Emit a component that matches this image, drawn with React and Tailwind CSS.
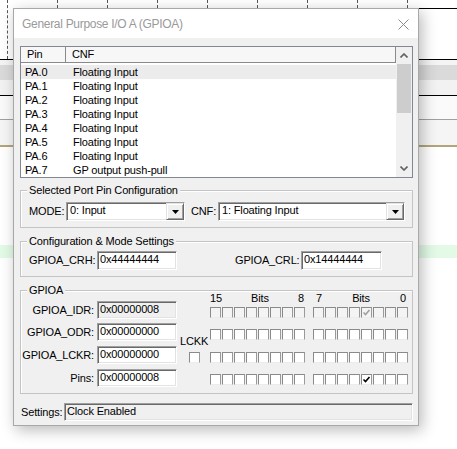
import React from "react";

const sunken =
  "border border-t-[#a0a0a0] border-l-[#a0a0a0] border-b-white border-r-white shadow-[inset_1px_1px_0_#696969,inset_-1px_-1px_0_#e3e3e3]";
const raised =
  "border border-t-[#e3e3e3] border-l-[#e3e3e3] border-b-[#696969] border-r-[#696969] shadow-[inset_1px_1px_0_#ffffff,inset_-1px_-1px_0_#a0a0a0]";

const rows = [
  ["PA.0", "Floating Input"],
  ["PA.1", "Floating Input"],
  ["PA.2", "Floating Input"],
  ["PA.3", "Floating Input"],
  ["PA.4", "Floating Input"],
  ["PA.5", "Floating Input"],
  ["PA.6", "Floating Input"],
  ["PA.7", "GP output push-pull"],
];

function Check({ color = "#000" }) {
  return (
    <svg width="9" height="9" viewBox="0 0 9 9">
      <path d="M1.5 4.5 L3.5 6.5 L7.5 2" fill="none" stroke={color} strokeWidth="1.6" />
    </svg>
  );
}

function Box({ checked, disabled }) {
  return (
    <div
      className={`w-[11px] h-[11px] flex items-center justify-center border border-t-[#8a8a8a] border-l-[#8a8a8a] border-r-[#9a9a9a] border-b-[#ececec] ${
        disabled ? "bg-[#f4f4f4]" : "bg-white"
      }`}
    >
      {checked ? <Check color={disabled ? "#a0a0a0" : "#000"} /> : null}
    </div>
  );
}

function BitRow({ checkedBit, disabled, className = "" }) {
  const high = Array.from({ length: 8 }, (_, i) => 15 - i);
  const low = Array.from({ length: 8 }, (_, i) => 7 - i);
  return (
    <div className={`flex ${className}`}>
      <div className="flex gap-[1px] w-[96px]">
        {high.map((b) => (
          <Box key={b} checked={b === checkedBit} disabled={disabled} />
        ))}
      </div>
      <div className="flex gap-[1px] ml-[7px]">
        {low.map((b) => (
          <Box key={b} checked={b === checkedBit} disabled={disabled} />
        ))}
      </div>
    </div>
  );
}

function Arrow() {
  return (
    <svg width="7" height="4" viewBox="0 0 7 4">
      <polygon points="0,0 7,0 3.5,4" fill="#000" />
    </svg>
  );
}

function Select({ value, className = "" }) {
  return (
    <div className={`${sunken} bg-white h-[19px] flex items-stretch ${className}`}>
      <div className="flex-1 pl-[3px] leading-[15px]">{value}</div>
      <div className={`${raised} bg-[#f0f0f0] w-[18px] flex items-center justify-center`}>
        <Arrow />
      </div>
    </div>
  );
}

function Edit({ value, gray, className = "" }) {
  return (
    <div className={`${sunken} ${gray ? "bg-[#f0f0f0]" : "bg-white"} pl-[2px] leading-[14px] ${className}`}>
      {value}
    </div>
  );
}

function Group({ label, className = "", children }) {
  return (
    <div className={`relative border border-[#c4c4c4] shadow-[inset_1px_1px_0_#ffffff] ${className}`}>
      <span className="absolute -top-[8px] left-[6px] px-[2px] bg-[#f0f0f0] leading-[14px]">{label}</span>
      {children}
    </div>
  );
}

export default function App() {
  return (
    <div className="relative w-[457px] h-[449px] overflow-hidden bg-white font-['Liberation_Sans',Arial,sans-serif] text-[11px] tracking-[-0.15px] text-black">
      {/* background canvas */}
      <div className="flex flex-col">
        <div className="h-[60px] flex pl-[7px] border-b border-black">
          {Array.from({ length: 10 }, (_, i) => (
            <div key={i} className="w-[50px] shrink-0 border-l border-dashed border-[#555]" />
          ))}
        </div>
        <div className="h-[5px] bg-[#f4f4f4]" />
        <div className="h-[15px] bg-[#dadada]" />
        <div className="h-[16px] bg-[#f2f2f2] border-b border-black" />
        <div className="h-[24px] bg-[#fafafa] border-b border-[#a0a0a0]" />
        <div className="h-[27px] bg-[#f5f5f5] border-b-2 border-[#b3a47a]" />
        <div className="h-[98px] bg-white" />
        <div className="h-[13px] bg-[#e3fbe6]" />
        <div className="flex-1 bg-white" />
      </div>
      <div className="absolute left-[419px] top-[8px] w-[38px] h-px bg-black" />

      {/* dialog window */}
      <div className="absolute left-[13px] top-[8px] w-[406px] h-[418px] border border-[#a8a8a8] bg-[#f0f0f0] shadow-[3px_4px_14px_rgba(0,0,0,0.28)] flex flex-col">
        <div className="h-[29px] bg-white flex items-center justify-between pl-[8px] pr-[9px]">
          <span className="font-['Liberation_Sans',sans-serif] text-[12px] tracking-[-0.3px] text-[#9a9a9a] mt-[1px]">
            General Purpose I/O A (GPIOA)
          </span>
          <svg width="11" height="11" viewBox="0 0 11 11" className="mt-[1px]">
            <path d="M0.5 0.5 L10.5 10.5 M10.5 0.5 L0.5 10.5" stroke="#8a8a8a" strokeWidth="1" />
          </svg>
        </div>

        <div className="flex-1 flex flex-col pl-[6px] pr-[5px] pt-[8px]">
          {/* list view */}
          <div className="h-[132px] border border-[#828790] bg-white flex overflow-hidden">
            <div className="flex-1 flex flex-col">
              <div className="h-[16px] flex bg-[#f7f7f7] border-b border-[#8a8a8a] leading-[15px]">
                <div className="w-[45px] pl-[6px] border-r border-[#8a8a8a]">Pin</div>
                <div className="flex-1 pl-[6px] border-r border-[#8a8a8a]">CNF</div>
              </div>
              <div className="pt-[2px] flex flex-col">
                {rows.map(([p, c], i) => (
                  <div key={p} className={`h-[14px] flex leading-[14px] ${i === 0 ? "bg-[#ececec]" : ""}`}>
                    <div className="w-[45px] pl-[4px]">{p}</div>
                    <div className="flex-1 pl-[7px]">{c}</div>
                  </div>
                ))}
              </div>
            </div>
            <div className="w-[16px] bg-[#f0f0f0] flex flex-col">
              <div className="h-[17px] flex items-center justify-center">
                <svg width="8" height="5" viewBox="0 0 8 5">
                  <path d="M0.5 4.5 L4 1 L7.5 4.5" fill="none" stroke="#606060" strokeWidth="1.6" />
                </svg>
              </div>
              <div className="h-[49px] bg-[#cdcdcd] mx-[1px]" />
              <div className="flex-1" />
              <div className="h-[17px] flex items-center justify-center">
                <svg width="8" height="5" viewBox="0 0 8 5">
                  <path d="M0.5 0.5 L4 4 L7.5 0.5" fill="none" stroke="#606060" strokeWidth="1.6" />
                </svg>
              </div>
            </div>
          </div>

          {/* Selected Port Pin Configuration */}
          <Group label="Selected Port Pin Configuration" className="mt-[12px]">
            <div className="flex items-center pt-[11px] pb-[6px] pl-[8px] pr-[7px]">
              <span className="w-[37px]">MODE:</span>
              <Select value="0: Input" className="w-[119px]" />
              <span className="ml-[6px] w-[27px]">CNF:</span>
              <Select value="1: Floating Input" className="flex-1" />
            </div>
          </Group>

          {/* Configuration & Mode Settings */}
          <Group label="Configuration & Mode Settings" className="mt-[13px]">
            <div className="flex items-center pt-[9px] pb-[6px] pl-[8px]">
              <span className="w-[68px]">GPIOA_CRH:</span>
              <Edit value="0x44444444" className="w-[80px] h-[19px] leading-[15px]" />
              <span className="ml-[58px] w-[66px]">GPIOA_CRL:</span>
              <Edit value="0x14444444" className="w-[81px] h-[19px] leading-[15px]" />
            </div>
          </Group>

          {/* GPIOA */}
          <Group label="GPIOA" className="mt-[13px]">
            <div className="flex pb-[6px]">
              <div className="flex flex-col pt-[10px]">
                {[
                  ["GPIOA_IDR:", "0x00000008", true, ""],
                  ["GPIOA_ODR:", "0x00000000", false, "mt-[4px]"],
                  ["GPIOA_LCKR:", "0x00000000", false, "mt-[5px]"],
                  ["Pins:", "0x00000008", false, "mt-[5px]"],
                ].map(([l, v, g, m]) => (
                  <div key={l} className={`flex items-center ${m}`}>
                    <span className="w-[73px] text-right">{l}</span>
                    <Edit value={v} gray={g} className="ml-[3px] w-[80px] h-[18px]" />
                  </div>
                ))}
              </div>
              <div className="w-[30px] ml-[3px] flex flex-col items-start pt-[44px]">
                <span className="leading-[12px]">LCKK</span>
                <div className="mt-[5px] ml-[9px]">
                  <Box />
                </div>
              </div>
              <div className="flex flex-col pt-[1px]">
                <div className="flex leading-[12px]">
                  <div className="w-[96px] flex justify-between pr-[2px]">
                    <span>15</span>
                    <span>Bits</span>
                    <span>8</span>
                  </div>
                  <div className="w-[96px] ml-[7px] flex justify-between pl-[3px] pr-[3px]">
                    <span>7</span>
                    <span>Bits</span>
                    <span>0</span>
                  </div>
                </div>
                <BitRow checkedBit={3} disabled className="mt-[3px]" />
                <BitRow className="mt-[11px]" />
                <BitRow className="mt-[12px]" />
                <BitRow checkedBit={3} className="mt-[11px]" />
              </div>
            </div>
          </Group>

          {/* Settings */}
          <div className="flex items-center mt-[9px]">
            <span className="pl-[1px] w-[44px]">Settings:</span>
            <div className={`${sunken} flex-1 h-[18px] bg-[#f0f0f0] pl-[2px] leading-[14px]`}>Clock Enabled</div>
          </div>
        </div>
      </div>
    </div>
  );
}
